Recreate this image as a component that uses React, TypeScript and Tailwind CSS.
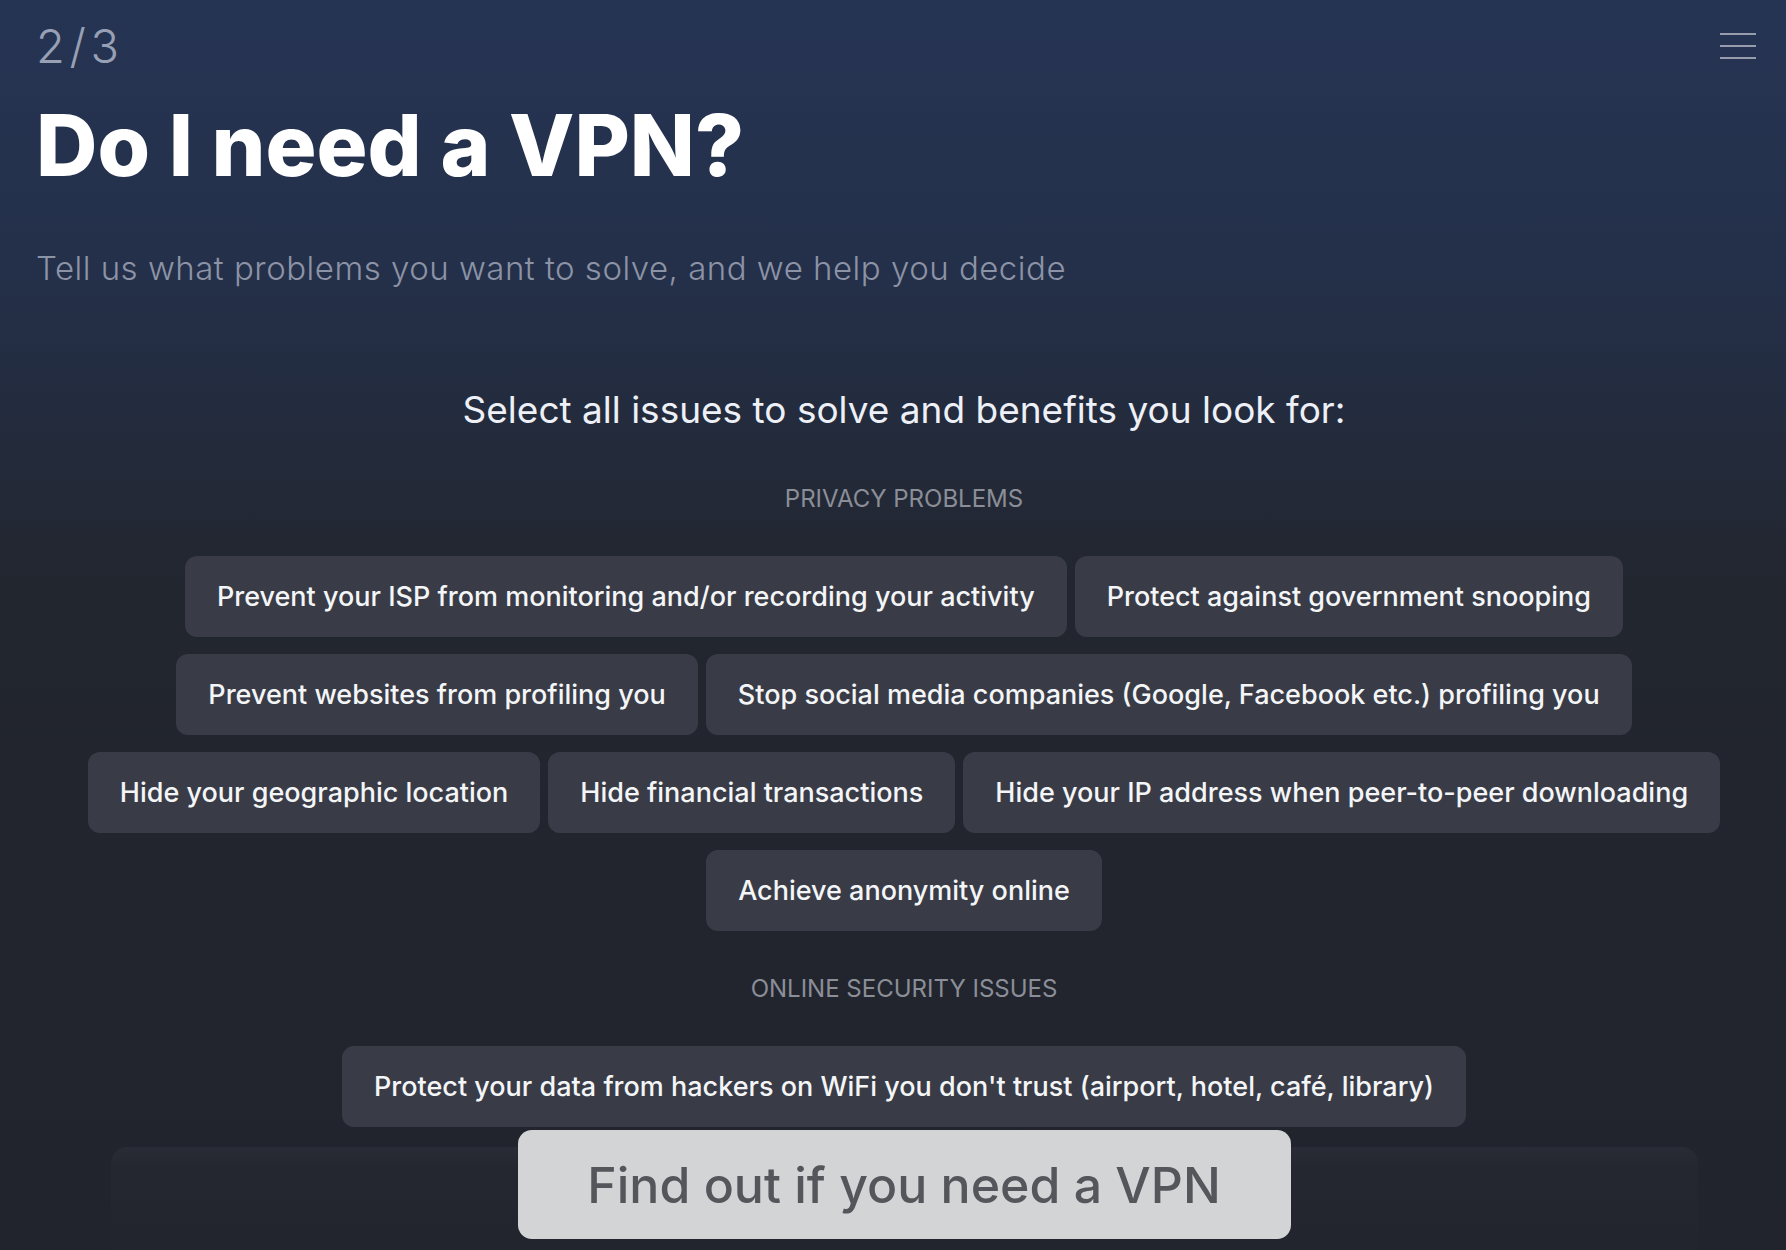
const privacy = [
  "Prevent your ISP from monitoring and/or recording your activity",
  "Protect against government snooping",
  "Prevent websites from profiling you",
  "Stop social media companies (Google, Facebook etc.) profiling you",
  "Hide your geographic location",
  "Hide financial transactions",
  "Hide your IP address when peer-to-peer downloading",
  "Achieve anonymity online",
];

const security = [
  "Protect your data from hackers on WiFi you don't trust (airport, hotel, café, library)",
];

const Choice = ({ label }: { label: string }) => (
  <button className="h-[81px] px-8 flex items-center rounded-xl bg-[#393c47] text-[27px] font-medium leading-none text-[#f4f5f7] whitespace-nowrap">
    {label}
  </button>
);

const Section = ({ title, items }: { title: string; items: string[] }) => (
  <div className="flex flex-col items-center">
    <div className="text-[24px] leading-none uppercase text-[#8b8e97]">{title}</div>
    <div className="mt-[45px] flex flex-wrap justify-center gap-x-2 gap-y-[17px]">
      {items.map((item) => (
        <Choice key={item} label={item} />
      ))}
    </div>
  </div>
);

export default function App() {
  return (
    <div className="min-h-screen w-full bg-[linear-gradient(180deg,#263454_0%,#243049_22%,#22262f_46%,#21242d_100%)] font-['Inter','Noto_Sans',sans-serif] pl-[36px] pr-[14px] pb-[140px]">
      <header className="pt-[22px] flex items-start justify-between">
        <div className="text-[47px] font-light leading-none tracking-[0.1em] text-[#97a0b4]">2/3</div>
        <button className="mt-[11px] mr-[16px] flex flex-col gap-[10px]">
          <span className="block h-[2px] w-[36px] bg-[#969cab]" />
          <span className="block h-[2px] w-[36px] bg-[#969cab]" />
          <span className="block h-[2px] w-[36px] bg-[#969cab]" />
        </button>
      </header>

      <h1 className="mt-[34px] text-[85px] font-extrabold leading-none text-white">
        Do I need a VPN?
      </h1>
      <p className="mt-[64px] text-[33px] font-light leading-none tracking-[0.015em] text-[#8c93a6]">
        Tell us what problems you want to solve, and we help you decide
      </p>

      <h2 className="mt-[106px] text-center text-[37px] leading-none text-[#eef0f7]">
        Select all issues to solve and benefits you look for:
      </h2>

      <div className="mt-[59px] flex flex-col gap-[46px]">
        <Section title="Privacy problems" items={privacy} />
        <Section title="Online security issues" items={security} />
      </div>

      <div className="fixed bottom-0 left-0 right-0 pl-[36px] pr-[14px] flex justify-center">
        <div className="w-[1587px] h-[103px] mt-auto rounded-t-2xl bg-[linear-gradient(180deg,#292c36_0%,#24272f_20%,#22252e_100%)] flex justify-center">
          <button className="-mt-[17px] mb-[11px] w-[773px] h-[109px] rounded-[14px] bg-[#d3d4d6] text-[50px] font-medium leading-none text-[#55565b]">
            Find out if you need a VPN
          </button>
        </div>
      </div>
    </div>
  );
}
